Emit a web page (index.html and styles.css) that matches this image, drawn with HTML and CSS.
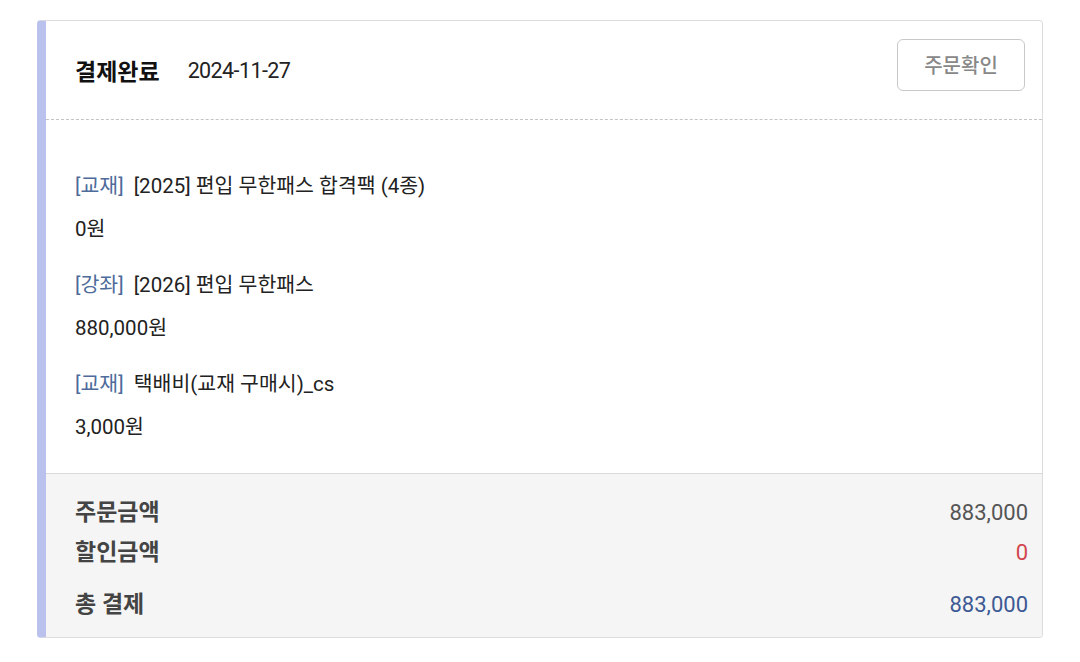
FILE: index.html
```html
<!DOCTYPE html>
<html lang="ko">

<head>
    <meta charset="UTF-8">
    <meta name="viewport" content="width=device-width, initial-scale=1.0">
    <title>주문내역</title>
    <link rel="stylesheet" href="styles.css">
</head>

<body>
    <div class="order-card">
        <div class="order-head">
            <div class="head-left">
                <strong class="status">결제완료</strong>
                <span class="date">2024-11-27</span>
            </div>
            <button class="confirm-btn">주문확인</button>
        </div>

        <ul class="order-items">
            <li>
                <p class="item-name"><span class="tag">[교재]</span> [2025] 편입 무한패스 합격팩 (4종)</p>
                <p class="item-price">0원</p>
            </li>
            <li>
                <p class="item-name"><span class="tag">[강좌]</span> [2026] 편입 무한패스</p>
                <p class="item-price">880,000원</p>
            </li>
            <li>
                <p class="item-name"><span class="tag">[교재]</span> 택배비(교재 구매시)_cs</p>
                <p class="item-price">3,000원</p>
            </li>
        </ul>

        <div class="order-sum">
            <div class="sum-row">
                <span class="sum-label">주문금액</span>
                <span class="sum-value">883,000</span>
            </div>
            <div class="sum-row">
                <span class="sum-label">할인금액</span>
                <span class="sum-value discount">0</span>
            </div>
            <div class="sum-row total">
                <span class="sum-label">총 결제</span>
                <span class="sum-value pay">883,000</span>
            </div>
        </div>
    </div>
</body>

</html>
```

FILE: styles.css
```css
/* Reset */
* {
    margin: 0;
    padding: 0;
    box-sizing: border-box;
}

body {
    font-family: Roboto, "Noto Sans CJK KR", sans-serif;
    background-color: #fff;
    color: #222;
    padding: 20px 0 0 37px;
}

/* Card */
.order-card {
    width: 1006px;
    border: 1px solid #dcdcdc;
    border-left: 9px solid #b9c1ec;
    border-radius: 4px;
    overflow: hidden;
}

/* Header */
.order-head {
    display: flex;
    align-items: center;
    justify-content: space-between;
    height: 99px;
    padding: 0 17px 0 29px;
    border-bottom: 1px dashed #c4c4c4;
}

.head-left {
    display: flex;
    align-items: center;
    gap: 28px;
}

.status {
    font-size: 23px;
    font-weight: 700;
    color: #111;
}

.date {
    font-size: 21.5px;
    color: #222;
    letter-spacing: -0.6px;
}

.confirm-btn {
    width: 128px;
    height: 52px;
    margin-bottom: 11px;
    background-color: #fff;
    border: 1.5px solid #c8c8c8;
    border-radius: 6px;
    font-family: inherit;
    font-size: 20px;
    font-weight: 500;
    color: #888;
}

/* Items */
.order-items {
    list-style-type: none;
    padding: 52px 29px 32px;
    display: flex;
    flex-direction: column;
    gap: 28px;
}

.item-name,
.item-price {
    font-size: 20.5px;
    line-height: 28px;
}

.item-name {
    margin-bottom: 15px;
}

.tag {
    color: #4e6b9a;
    margin-right: 5px;
}

/* Summary */
.order-sum {
    background-color: #f5f5f5;
    border-top: 1px solid #dadada;
    padding: 24px 14px 17px 29px;
    display: flex;
    flex-direction: column;
    gap: 10px;
}

.sum-row {
    display: flex;
    justify-content: space-between;
    align-items: center;
    height: 30px;
}

.sum-row.total {
    margin-top: 12px;
}

.sum-label {
    font-size: 23px;
    font-weight: 700;
    color: #444;
    line-height: 30px;
}

.sum-value {
    font-size: 22px;
    color: #555;
    line-height: 30px;
}

.discount {
    color: #d2474d;
}

.pay {
    color: #3d5a94;
}
```
